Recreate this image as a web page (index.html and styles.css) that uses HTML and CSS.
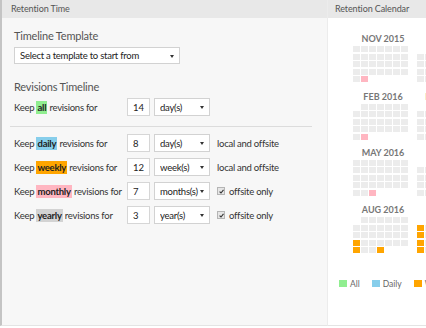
FILE: index.html
```html
<!DOCTYPE html>
<html lang="en">
<head>
    <meta charset="UTF-8">
    <title>Retention</title>
    <link rel="stylesheet" href="styles.css">
</head>
<body>
    <div class="panel panel-time">
        <div class="panel-header">Retention Time</div>
        <div class="panel-body">
            <h2>Timeline Template</h2>
            <div class="dropdown template">
                <select>
                    <option>Select a template to start from</option>
                </select>
            </div>

            <h2 class="revisions-title">Revisions Timeline</h2>
            <div class="rule-row">
                <span class="rule-label">Keep <b class="tag tag-all">all</b> revisions for</span>
                <input class="count" type="text" value="14">
                <div class="dropdown unit"><select><option>day(s)</option></select></div>
            </div>

            <hr>

            <div class="rule-row">
                <span class="rule-label">Keep <b class="tag tag-daily">daily</b> revisions for</span>
                <input class="count" type="text" value="8">
                <div class="dropdown unit"><select><option>day(s)</option></select></div>
                <span class="where">local and offsite</span>
            </div>
            <div class="rule-row">
                <span class="rule-label">Keep <b class="tag tag-weekly">weekly</b> revisions for</span>
                <input class="count" type="text" value="12">
                <div class="dropdown unit"><select><option>week(s)</option></select></div>
                <span class="where">local and offsite</span>
            </div>
            <div class="rule-row">
                <span class="rule-label">Keep <b class="tag tag-monthly">monthly</b> revisions for</span>
                <input class="count" type="text" value="7">
                <div class="dropdown unit"><select><option>months(s)</option></select></div>
                <span class="where">
                    <span class="check"><svg width="5" height="5" viewBox="0 0 5 5"><path d="M0.6 2.6 L2 4 L4.5 0.8" fill="none" stroke="#333" stroke-width="1.1"/></svg></span>
                    offsite only
                </span>
            </div>
            <div class="rule-row">
                <span class="rule-label">Keep <b class="tag tag-yearly">yearly</b> revisions for</span>
                <input class="count" type="text" value="3">
                <div class="dropdown unit"><select><option>year(s)</option></select></div>
                <span class="where">
                    <span class="check"><svg width="5" height="5" viewBox="0 0 5 5"><path d="M0.6 2.6 L2 4 L4.5 0.8" fill="none" stroke="#333" stroke-width="1.1"/></svg></span>
                    offsite only
                </span>
            </div>
        </div>
    </div>

    <div class="panel panel-calendar">
        <div class="panel-header">Retention Calendar</div>
        <div class="calendar" id="calendar"></div>
        <div class="legend">
            <span class="legend-item"><i class="swatch sw-all"></i>All</span>
            <span class="legend-item"><i class="swatch sw-daily"></i>Daily</span>
            <span class="legend-item"><i class="swatch sw-weekly"></i>Weekly</span>
            <span class="legend-item"><i class="swatch sw-monthly"></i>Monthly</span>
        </div>
    </div>

    <script>
        // start = weekday of the 1st (0 = Sunday)
        var months = [
            { name: 'NOV 2015', start: 0, days: 30, marks: { 30: 'pink' } },
            { name: 'DEC 2015', start: 2, days: 31, marks: {} },
            { name: 'JAN 2016', start: 5, days: 31, marks: {} },
            { name: 'FEB 2016', start: 1, days: 29, marks: { 29: 'pink' } },
            { name: 'MAR 2016', start: 2, days: 31, marks: {} },
            { name: 'APR 2016', start: 5, days: 30, marks: {} },
            { name: 'MAY 2016', start: 0, days: 31, marks: { 31: 'pink' } },
            { name: 'JUN 2016', start: 3, days: 30, marks: {} },
            { name: 'JUL 2016', start: 5, days: 31, marks: {} },
            { name: 'AUG 2016', start: 1, days: 31, marks: { 21: 'orange', 28: 'orange', 31: 'orange' } },
            { name: 'SEP 2016', start: 4, days: 30, marks: { 4: 'orange', 11: 'orange', 18: 'orange', 25: 'orange' } },
            { name: 'OCT 2016', start: 6, days: 31, marks: {} }
        ];

        var cal = document.getElementById('calendar');
        var html = '';
        for (var i = 0; i < months.length; i++) {
            var m = months[i];
            html += '<div class="month"><div class="month-name">' + m.name + '</div><div class="days">';
            for (var d = 1; d <= m.days; d++) {
                var cls = 'day' + (m.marks[d] ? ' day-' + m.marks[d] : '');
                var style = d === 1 ? ' style="grid-column-start:' + (m.start + 1) + '"' : '';
                html += '<span class="' + cls + '"' + style + '></span>';
            }
            html += '</div></div>';
        }
        cal.innerHTML = html;
    </script>
</body>
</html>
```

FILE: styles.css
```css
body {
    margin: 0;
    display: flex;
    height: 328px;
    overflow: hidden;
    background: #fff;
    font-family: Lato, "Liberation Sans", sans-serif;
    font-size: 9.5px;
    letter-spacing: -0.25px;
    color: #333;
}

.panel {
    height: 326px;
    box-sizing: border-box;
    border-bottom: 1px solid #e4e4e4;
    overflow: hidden;
}

.panel-header {
    height: 18px;
    line-height: 18px;
    background: #e8e8e8;
    color: #555;
    font-size: 9px;
    letter-spacing: -0.1px;
    white-space: nowrap;
}

/* left side */

.panel-time {
    width: 327px;
    flex-shrink: 0;
    border-left: 2px solid #c4c4c4;
    background: #f7f7f7;
}

.panel-time .panel-header {
    padding-left: 9px;
}

.panel-body {
    padding: 11px 0 0 12px;
}

h2 {
    margin: 0;
    font-size: 11px;
    font-weight: normal;
    line-height: 14px;
    letter-spacing: -0.2px;
    color: #555;
}

.revisions-title {
    margin-top: 16px;
}

.dropdown {
    position: relative;
    display: inline-block;
}

.dropdown select {
    appearance: none;
    -webkit-appearance: none;
    display: block;
    width: 100%;
    height: 18px;
    margin: 0;
    padding: 0 0 0 5px;
    border: 1px solid #d2d2d2;
    border-radius: 0;
    background: #fff;
    font-family: inherit;
    font-size: 9.5px;
    letter-spacing: -0.25px;
    color: #222;
}

.dropdown::after {
    content: "";
    position: absolute;
    right: 6px;
    top: 8px;
    border-left: 2.5px solid transparent;
    border-right: 2.5px solid transparent;
    border-top: 3px solid #333;
}

.template {
    display: block;
    width: 166px;
    margin-top: 4px;
}

.template select {
    height: 17px;
}

.rule-row {
    display: flex;
    align-items: center;
    height: 18px;
    margin-top: 6px;
}

.revisions-title + .rule-row {
    margin-top: 4px;
}

.rule-label {
    width: 113px;
    flex-shrink: 0;
    white-space: nowrap;
}

.tag {
    padding: 1px 1px;
    color: #222;
}

.tag-all { background: #90ee90; }
.tag-daily { background: #87ceeb; }
.tag-weekly { background: #ffa500; }
.tag-monthly { background: #ffb6c1; }
.tag-yearly { background: #d3d3d3; }

.count {
    width: 23px;
    height: 18px;
    box-sizing: border-box;
    margin: 0 4px 0 0;
    padding: 0 0 0 5px;
    border: 1px solid #d6d6d6;
    background: #fff;
    font-family: inherit;
    font-size: 9.5px;
    color: #222;
}

.unit {
    width: 56px;
}

.where {
    display: flex;
    align-items: center;
    margin-left: 7px;
    white-space: nowrap;
}

.check {
    display: inline-flex;
    align-items: center;
    justify-content: center;
    width: 6px;
    height: 6px;
    margin-right: 4px;
    border: 1px solid #b5b5b5;
    background: #e6e6e6;
}

hr {
    margin: 10px 0 0 -4px;
    width: 302px;
    height: 0;
    border: none;
    border-top: 1px solid #dcdcdc;
}

hr + .rule-row {
    margin-top: 7px;
}

/* right side */

.panel-calendar {
    flex: 1;
    min-width: 0;
    position: relative;
    border-left: 1px solid #ececec;
}

.panel-calendar .panel-header {
    padding-left: 7px;
}

.calendar {
    display: grid;
    grid-template-columns: repeat(3, 60px);
    column-gap: 4px;
    row-gap: 8px;
    padding: 16px 0 0 25px;
    width: 300px;
}

.month-name {
    height: 10px;
    line-height: 10px;
    margin-bottom: 2px;
    text-align: center;
    font-size: 9px;
    font-weight: bold;
    letter-spacing: 0;
    color: #777;
    white-space: nowrap;
}

.days {
    display: grid;
    grid-template-columns: repeat(7, 7px);
    grid-template-rows: repeat(5, 6px);
    column-gap: 1px;
    row-gap: 1.5px;
}

.day {
    background: #ececec;
}

.day-pink { background: #ffb6c1; }
.day-orange { background: #ffa500; }

.legend {
    display: flex;
    gap: 12px;
    margin: 24px 0 0 11px;
    font-size: 8.5px;
    letter-spacing: 0;
    color: #666;
    white-space: nowrap;
}

.legend-item {
    display: flex;
    align-items: center;
}

.swatch {
    width: 8px;
    height: 7px;
    margin-right: 3px;
}

.sw-all { background: #90ee90; }
.sw-daily { background: #87ceeb; }
.sw-weekly { background: #ffa500; }
.sw-monthly { background: #ffb6c1; }
```
